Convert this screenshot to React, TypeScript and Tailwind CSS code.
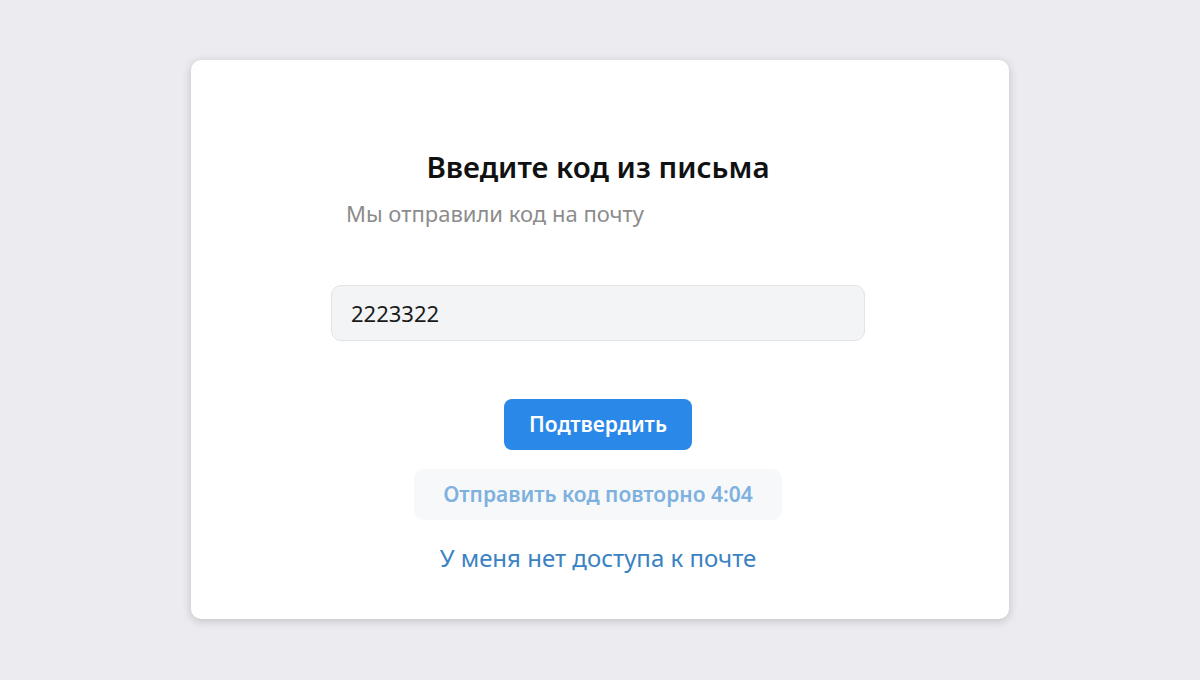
import React from "react";

const App = () => {
  return (
    <div className="min-h-[680px] w-full bg-[#ebebf0] pt-[60px] font-['Noto_Sans','Open_Sans',sans-serif]">
      <div className="mx-auto flex h-[559px] w-[818px] flex-col items-center rounded-[10px] bg-white pr-[4px] pt-[88px] shadow-[0_2px_10px_rgba(0,0,0,0.18)]">
        <div className="flex w-[534px] flex-col">
          <h1 className="text-center text-[29.5px] font-semibold leading-[38px] text-[#111]">
            Введите код из письма
          </h1>
          <p className="mt-[12px] pl-[15px] text-[22px] leading-[30px] text-[#8c8c8c]">
            Мы отправили код на почту
          </p>
          <input
            defaultValue="2223322"
            className="mt-[57px] h-[56px] w-full rounded-[10px] border border-[#e2e3e6] bg-[#f3f4f6] px-[19px] text-[22px] text-[#1a1a1a] outline-none"
          />
        </div>
        <button className="mt-[58px] h-[51px] w-[188px] rounded-[8px] bg-[#2a88e8] text-[21px] font-semibold text-white">
          Подтвердить
        </button>
        <button className="mt-[19px] h-[51px] w-[368px] rounded-[10px] bg-[#f7f8fa] text-[21px] font-semibold text-[#7fb1df]">
          Отправить код повторно 4:04
        </button>
        <a className="mt-[22px] text-[24px] leading-[32px] text-[#3a82c4]" href="#">
          У меня нет доступа к почте
        </a>
      </div>
    </div>
  );
};

export default App;
